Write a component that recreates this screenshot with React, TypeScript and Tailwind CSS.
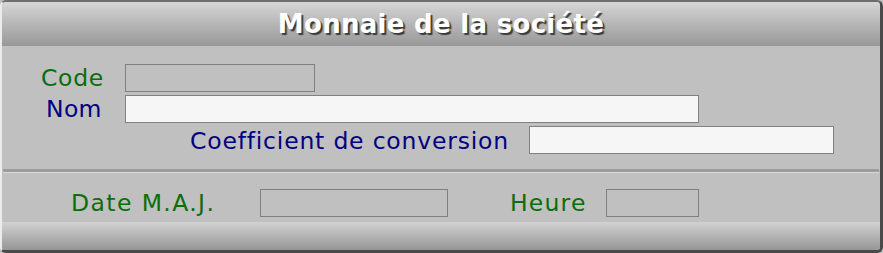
import React from "react";

const font = { fontFamily: '"DejaVu Sans", Verdana, sans-serif' };

export default function App() {
  return (
    <div className="w-[883px] h-[253px] bg-[#c0c0c0]" style={font}>
      <div className="w-[883px] h-[253px] flex flex-col rounded-[6px] border-t-2 border-l-2 border-r-[3px] border-b-[3px] border-t-[#6e6e6e] border-l-[#ececec] border-r-[#4a4a4a] border-b-[#4a4a4a] bg-[#c0c0c0] overflow-hidden">
        <div className="h-[44px] shrink-0 flex items-center justify-center bg-gradient-to-b from-[#d6d6d6] to-[#989898]">
          <span className="text-[26px] font-bold text-white leading-none [text-shadow:2px_2px_1px_#3a3a3a] tracking-[0.3px]">
            Monnaie de la société
          </span>
        </div>

        <div className="mt-[18px] flex items-center h-[28px]">
          <div className="w-[123px] pl-[39px] pt-[2px] text-[23.5px] leading-none tracking-[0.7px] text-[#0a6e0a]">Code</div>
          <div className="w-[190px] h-[28px] border border-[#808080] bg-[#c0c0c0]" />
        </div>
        <div className="mt-[3px] flex items-center h-[28px]">
          <div className="w-[123px] pl-[44px] pt-[2px] text-[23.5px] leading-none tracking-[0.3px] text-[#000080]">Nom</div>
          <div className="w-[574px] h-[28px] border border-[#808080] bg-[#f6f6f6]" />
        </div>
        <div className="mt-[3px] flex items-center h-[28px]">
          <div className="w-[527px] pl-[188px] pt-[3px] text-[23.5px] leading-none tracking-[0.8px] text-[#000080] whitespace-nowrap">Coefficient de conversion</div>
          <div className="w-[305px] h-[28px] border border-[#808080] bg-[#f6f6f6]" />
        </div>

        <div className="mt-[15px] mx-[1px] h-[3px] bg-[#9c9c9c]" />
        <div className="mx-[1px] h-[1px] bg-[#dadada]" />

        <div className="mt-[16px] flex items-center h-[28px]">
          <div className="w-[258px] pl-[69px] pt-[2px] text-[23.5px] leading-none tracking-[1.4px] text-[#0a6e0a] whitespace-nowrap">Date M.A.J.</div>
          <div className="w-[188px] h-[28px] border border-[#808080] bg-[#c0c0c0]" />
          <div className="w-[158px] pl-[62px] pt-[2px] text-[23.5px] leading-none tracking-[1.2px] text-[#0a6e0a]">Heure</div>
          <div className="w-[93px] h-[28px] border border-[#808080] bg-[#c0c0c0]" />
        </div>

        <div className="mt-[5px] flex-1 bg-gradient-to-b from-[#d2d2d2] to-[#969696]" />
      </div>
    </div>
  );
}
